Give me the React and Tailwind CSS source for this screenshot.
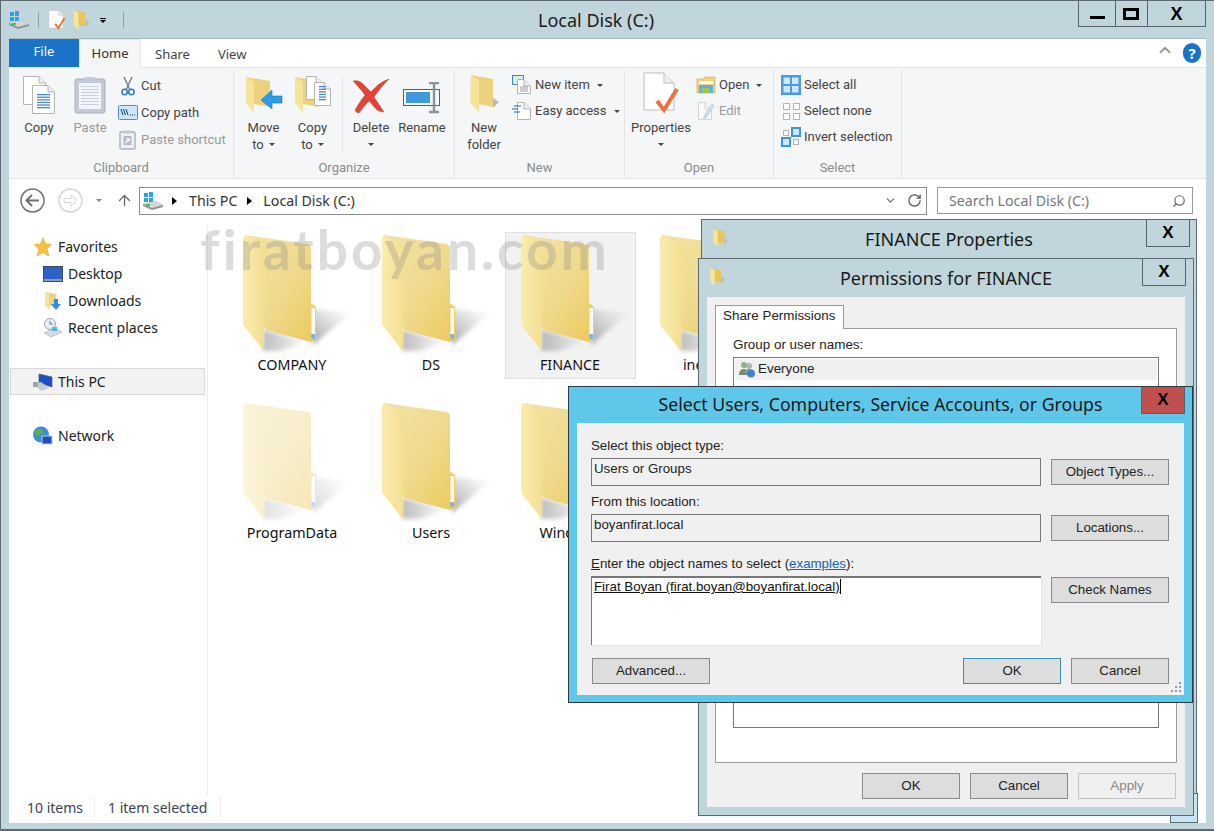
import { ArrowUp, ChevronDown, ChevronUp, RotateCw, Search } from "lucide-react";

function Caret({ className = "" }) {
  return <span className={`inline-block w-0 h-0 border-x-[3px] border-x-transparent border-t-[3px] border-t-[#444] ${className}`} />;
}

function FolderIcon({ faded }) {
  return (
    <svg width="108" height="122" viewBox="0 0 108 122" className={faded ? "opacity-45" : ""}>
      <defs>
        <linearGradient id="fback" x1="0" y1="0" x2="1" y2="1">
          <stop offset="0" stopColor="#f2e3a6" />
          <stop offset="0.55" stopColor="#efd98c" />
          <stop offset="1" stopColor="#ecc95c" />
        </linearGradient>
        <linearGradient id="fflap" x1="0" y1="0" x2="1" y2="0">
          <stop offset="0" stopColor="#faecb0" />
          <stop offset="1" stopColor="#f3dd8e" />
        </linearGradient>
        <linearGradient id="fshadow" x1="0" y1="1" x2="1" y2="0">
          <stop offset="0" stopColor="#a0a0a0" />
          <stop offset="0.8" stopColor="#c8c8c8" stopOpacity="0.2" />
          <stop offset="1" stopColor="#c8c8c8" stopOpacity="0" />
        </linearGradient>
        <linearGradient id="fshadow2" x1="0" y1="0" x2="1" y2="0">
          <stop offset="0" stopColor="#a0a0a0" stopOpacity="0.7" />
          <stop offset="1" stopColor="#a0a0a0" stopOpacity="0" />
        </linearGradient>
        <filter id="fblur" x="-20%" y="-20%" width="140%" height="140%">
          <feGaussianBlur stdDeviation="2" />
        </filter>
      </defs>
      <path d="M70 76 L108 80 L70 112 Z" fill="url(#fshadow)" filter="url(#fblur)" />
      <path d="M20 97 L66 108 L38 118 L20 118 Z" fill="url(#fshadow2)" filter="url(#fblur)" />
      <path d="M2 2 L65 11 Q68 12 68 16 L68 70 L73 74 L73 107 L68 109 L22 97 Z" fill="url(#fback)" />
      <rect x="68.5" y="75" width="3.5" height="26" fill="#fdfdf5" />
      <rect x="68.5" y="101" width="3.5" height="5" fill="#7fb0e0" />
      <path d="M2 2 L21 12 Q24 14 24 18 L24 75 L21 78 L21 118 L0 92 L0 5 Z" fill="url(#fflap)" />
    </svg>
  );
}

function SmallFolder({ w = 14, h = 18 }) {
  return (
    <svg width={w} height={h} viewBox="0 0 14 18">
      <path d="M1 1 L11 3 L11 14 L4 13 Z" fill="#e6c65e" />
      <path d="M11 9 L14 11 L11 15 Z" fill="#bbb" />
      <path d="M1 1 L5 3 L5 17 L1 13 Z" fill="#f6e59a" />
    </svg>
  );
}

function PageIcon({ x = 0, y = 0, w = 24, h = 30, lines }) {
  return (
    <g transform={`translate(${x} ${y})`}>
      <path d={`M0.5 0.5 H${w - 7} L${w - 0.5} 7 V${h - 0.5} H0.5 Z`} fill="#fff" stroke="#b4b4b4" />
      <path d={`M${w - 7} 0.5 V7 H${w - 0.5}`} fill="#eee" stroke="#b4b4b4" />
      {lines && [0, 1, 2, 3, 4, 5].map((i) => <rect key={i} x="5" y={h - 20 + i * 2.6} width={w - 10} height="1.3" fill="#4d86c0" />)}
    </g>
  );
}

function CopyIcon() {
  return (
    <svg width="34" height="38" viewBox="0 0 34 38">
      <PageIcon x={1} y={0} w={23} h={29} />
      <PageIcon x={10} y={9} w={23} h={29} lines />
    </svg>
  );
}

function PasteIcon() {
  return (
    <svg width="32" height="38" viewBox="0 0 32 38">
      <rect x="1" y="3" width="30" height="34" rx="2" fill="#c2cad8" stroke="#a5aebf" />
      <rect x="5" y="7" width="22" height="26" fill="#f4f5f8" />
      {[0, 1, 2, 3, 4, 5, 6].map((i) => <rect key={i} x="7" y={10 + i * 3} width="18" height="1" fill="#c8d0dc" />)}
      <rect x="11" y="1" width="10" height="5" rx="1" fill="#c2cad8" />
    </svg>
  );
}

function ScissorsIcon() {
  return (
    <svg width="14" height="20" viewBox="0 0 14 20" fill="none">
      <path d="M3 1 L9 14 M11 1 L5 14" stroke="#7e8894" strokeWidth="1.6" />
      <circle cx="3.6" cy="16" r="2.7" stroke="#2b7cd3" strokeWidth="1.5" />
      <circle cx="10.4" cy="16" r="2.7" stroke="#2b7cd3" strokeWidth="1.5" />
    </svg>
  );
}

function CopyPathIcon() {
  return (
    <svg width="20" height="16" viewBox="0 0 20 16">
      <rect x="0.5" y="0.5" width="19" height="14" rx="1" fill="#cfe6fa" stroke="#4a90d9" />
      <path d="M3 4 L5 10 M5.5 4 L7.5 10 M8 4 L10 10" stroke="#1a3a66" strokeWidth="1" />
      <path d="M12 10 H13 M14 10 H15 M16 10 H17" stroke="#1a3a66" strokeWidth="1" />
    </svg>
  );
}

function PasteShortcutIcon() {
  return (
    <svg width="18" height="20" viewBox="0 0 18 20">
      <rect x="1" y="2" width="15" height="17" rx="1" fill="#eef0f4" stroke="#a9b2c0" strokeWidth="1.4" />
      <rect x="5" y="0.5" width="7" height="3" fill="#c2cad8" />
      <rect x="4.5" y="6" width="8" height="9" fill="#b4bac4" />
      <path d="M6.5 13 L10 9 M7.5 8.8 H10.2 V11.5" stroke="#fff" strokeWidth="1.2" fill="none" />
    </svg>
  );
}

function MoveToIcon() {
  return (
    <svg width="38" height="38" viewBox="0 0 38 38">
      <path d="M1 1 L25 5 L25 31 L9 28 Z" fill="#ecd27c" />
      <path d="M1 1 L9 6 L9 37 L1 27 Z" fill="#f6e49a" />
      <path d="M37 20 H27 V14 L16 24 L27 33 V27 H37 Z" fill="#2f9be8" stroke="#1778c4" strokeWidth="0.6" />
    </svg>
  );
}

function CopyToIcon() {
  return (
    <svg width="38" height="38" viewBox="0 0 38 38">
      <path d="M1 1 L25 5 L25 31 L9 28 Z" fill="#ecd27c" />
      <path d="M1 1 L9 6 L9 37 L1 27 Z" fill="#f6e49a" />
      <PageIcon x={12} y={0} w={17} h={24} />
      <PageIcon x={20} y={6} w={17} h={24} lines />
    </svg>
  );
}

function DeleteIcon() {
  return (
    <svg width="38" height="36" viewBox="0 0 38 36">
      <path d="M1 3 C5 2 8 3 11 6 L19 14 C24 8 30 3 37 1 C31 7 26 13 22 19 L32 34 C29 34 26 33 24 31 L17 23 C13 27 10 31 7 35 C5 35 4 34 3 32 C6 27 9 22 13 17 C9 12 5 7 1 3 Z" fill="#e04436" stroke="#c04a3e" strokeWidth="0.5" />
    </svg>
  );
}

function RenameIcon() {
  return (
    <svg width="38" height="32" viewBox="0 0 38 32">
      <rect x="0.5" y="7.5" width="36" height="16" fill="#f4fbff" stroke="#1c6fb5" />
      <rect x="3" y="10" width="24" height="11" fill="#3f9ad9" />
      <path d="M26 1 H36 M31 1 V30 M26 30 H36" stroke="#8a929c" strokeWidth="2.4" fill="none" />
    </svg>
  );
}

function NewFolderIcon() {
  return (
    <svg width="30" height="40" viewBox="0 0 30 40">
      <path d="M2 1 L24 5 L24 33 L9 30 Z" fill="#ecd27c" />
      <path d="M24 24 L30 28 L24 34 Z" fill="#bbb" />
      <path d="M2 1 L10 6 L10 39 L1 28 Z" fill="#f6e49a" />
    </svg>
  );
}

function NewItemIcon() {
  return (
    <svg width="20" height="20" viewBox="0 0 20 20">
      <rect x="0.5" y="0.5" width="11" height="9" fill="#d8ecfb" stroke="#3f86c8" />
      <PageIcon x={5} y={4} w={14} h={15} />
      <path d="M8 12 H16 M8 14 H16 M8 16 H16" stroke="#999" />
    </svg>
  );
}

function EasyAccessIcon() {
  return (
    <svg width="20" height="20" viewBox="0 0 20 20">
      <PageIcon x={5} y={1} w={14} h={18} />
      <path d="M2 5 H9 M0 8 H6 M2 11 H8" stroke="#2469b8" strokeWidth="1.2" />
    </svg>
  );
}

function PropertiesIcon({ w = 36, h = 42 }) {
  return (
    <svg width={w} height={h} viewBox="0 0 36 42">
      <path d="M1 1 H21 L31 11 V38 H1 Z" fill="#fff" stroke="#bdbdbd" />
      <path d="M21 1 V11 H31" fill="#eee" stroke="#bdbdbd" />
      <path d="M14 29 L21 38 L34 17" fill="none" stroke="#e8743c" strokeWidth="4" />
    </svg>
  );
}

function OpenIcon() {
  return (
    <svg width="20" height="18" viewBox="0 0 20 18">
      <path d="M1 3 H7 L9 1 H19 V17 H1 Z" fill="#f1d27a" stroke="#c9a94c" strokeWidth="0.6" />
      <rect x="3" y="5" width="14" height="3" fill="#fff" />
      <rect x="3" y="9" width="14" height="8" fill="#5cb0e8" />
      <rect x="6" y="12" width="8" height="5" fill="#9ec653" />
    </svg>
  );
}

function EditIcon() {
  return (
    <svg width="18" height="20" viewBox="0 0 18 20" className="opacity-50">
      <PageIcon x={1} y={1} w={14} h={18} />
      <path d="M7 15 L15 3 L17 5 L9 17 L6.5 17.5 Z" fill="#a8c8e8" stroke="#5b8fc2" strokeWidth="0.6" />
    </svg>
  );
}

function SelectNoneIcon() {
  return (
    <svg width="17" height="17" viewBox="0 0 17 17">
      {[[0, 0], [10, 0], [0, 10], [10, 10]].map(([x, y]) => (
        <rect key={`${x}-${y}`} x={x + 0.5} y={y + 0.5} width="6" height="6" fill="#fff" stroke="#b4b4b4" />
      ))}
    </svg>
  );
}

function InvertIcon() {
  return (
    <svg width="20" height="20" viewBox="0 0 20 20">
      <rect x="2.5" y="3.5" width="5" height="5" fill="#fff" stroke="#b4b4b4" />
      <rect x="12.5" y="12.5" width="5" height="5" fill="#fff" stroke="#b4b4b4" />
      <rect x="11" y="1" width="8" height="8" fill="#cfe6fb" stroke="#3d94e6" strokeWidth="2" />
      <rect x="1" y="11" width="8" height="8" fill="#cfe6fb" stroke="#3d94e6" strokeWidth="2" />
    </svg>
  );
}

function SelectAllIcon() {
  return (
    <svg width="20" height="20" viewBox="0 0 20 20">
      <rect width="20" height="20" fill="#4a9ae8" />
      <rect x="2.5" y="2.5" width="6.5" height="6.5" fill="#cfe6fb" />
      <rect x="11" y="2.5" width="6.5" height="6.5" fill="#cfe6fb" />
      <rect x="2.5" y="11" width="6.5" height="6.5" fill="#cfe6fb" />
      <rect x="11" y="11" width="6.5" height="6.5" fill="#cfe6fb" />
    </svg>
  );
}

function DriveIcon() {
  return (
    <svg width="20" height="18" viewBox="0 0 20 18">
      <rect x="1" y="1" width="4" height="4" fill="#2aa3e0" />
      <rect x="6" y="0" width="4" height="5" fill="#2aa3e0" />
      <rect x="1" y="6" width="4" height="4" fill="#2aa3e0" />
      <rect x="6" y="6" width="4" height="4" fill="#2aa3e0" />
      <path d="M0 12 L12 9 L20 13 L20 15 L9 18 L0 14 Z" fill="#8d9491" />
      <path d="M0 12 L12 9 L20 13 L9 16 Z" fill="#d2d8d4" />
      <rect x="3" y="12" width="4" height="2" fill="#3fbf6a" />
    </svg>
  );
}

function CircleNav({ light, flip }) {
  const c = light ? "#d6d6d6" : "#6f6f6f";
  return (
    <svg width="25" height="25" viewBox="0 0 25 25" fill="none">
      <circle cx="12.5" cy="12.5" r="11.5" stroke={c} strokeWidth="1.5" />
      {flip ? (
        <path d="M6 10.5 H13 V7 L19 12.5 L13 18 V14.5 H6 Z" stroke={c} />
      ) : (
        <path d="M19 12.5 H7 M12 7 L6.5 12.5 L12 18" stroke={c} strokeWidth="2" />
      )}
    </svg>
  );
}

function Triangle({ className = "" }) {
  return <span className={`block w-0 h-0 shrink-0 border-y-[4px] border-y-transparent border-l-[5px] border-l-black ${className}`} />;
}

function StarIcon() {
  return (
    <svg width="18" height="20" viewBox="0 0 18 20">
      <path d="M9 1 L11.5 7 L17.5 7.5 L13 12 L15 19 L9 15.5 L3 19 L5 12 L0.5 7.5 L6.5 7 Z" fill="#f7c23e" stroke="#f09a2e" strokeWidth="0.6" />
    </svg>
  );
}

function DesktopIcon() {
  return (
    <svg width="20" height="16" viewBox="0 0 20 16">
      <rect x="0.5" y="0.5" width="19" height="15" fill="#2a62c8" stroke="#3a4a5e" />
      <rect x="1" y="13" width="18" height="2" fill="#8aa0b8" />
    </svg>
  );
}

function DownloadsIcon() {
  return (
    <svg width="18" height="20" viewBox="0 0 18 20">
      <path d="M1 1 L12 3 L12 16 L5 15 Z" fill="#ecd27c" />
      <path d="M1 1 L5 3 L5 19 L1 14 Z" fill="#f6e49a" />
      <path d="M10 8 H14 V13 H17 L12 19 L7 13 H10 Z" fill="#2f8fdf" />
    </svg>
  );
}

function RecentIcon() {
  return (
    <svg width="20" height="20" viewBox="0 0 20 20">
      <circle cx="7" cy="6" r="5.5" fill="#e8eef4" stroke="#9aa5b0" />
      <path d="M7 3 V6 H10" stroke="#6a7680" fill="none" />
      <path d="M1 15 L12 10 L19 14 L8 19 Z" fill="#d4dce2" stroke="#a0a8b0" strokeWidth="0.6" />
      <rect x="9" y="9" width="5" height="4" fill="#5bb0e8" />
    </svg>
  );
}

function PcIcon() {
  return (
    <svg width="20" height="18" viewBox="0 0 20 18">
      <path d="M6 1 L19 4 L19 14 L6 10 Z" fill="#1f4fc8" stroke="#4a5a6e" strokeWidth="0.7" />
      <path d="M1 11 L8 9 L16 15 L8 18 Z" fill="#c4ccd2" />
      <rect x="0" y="9" width="5" height="5" fill="#9aa6ae" />
    </svg>
  );
}

function NetworkIcon() {
  return (
    <svg width="20" height="20" viewBox="0 0 20 20">
      <circle cx="8" cy="8.5" r="8" fill="#3a8fd0" />
      <path d="M3 4 C6 2 9 3 10 6 C8 9 5 8 4 12 C2 10 2 6 3 4 Z M11 11 C13 10 15 11 15 13 L12 15 Z" fill="#5db04a" />
      <rect x="9" y="10" width="10" height="8" fill="#1f4fc8" stroke="#c4ccd2" />
    </svg>
  );
}

function UsersIcon() {
  return (
    <svg width="17" height="17" viewBox="0 0 17 17">
      <circle cx="5" cy="4" r="3" fill="#8fae8a" />
      <path d="M0 14 C0 9 3 8 5 8 C8 8 9 10 9 14 Z" fill="#6f8f76" />
      <circle cx="10" cy="5" r="3" fill="#a9b9ad" />
      <path d="M6 12 C6 9 8 8 11 8 C13 8 15 9 15 12 Z" fill="#8f9f98" />
      <circle cx="12" cy="12.5" r="4" fill="#3f83cf" />
    </svg>
  );
}

function LargeBtn({ icon, lines, caret, disabled, w }) {
  return (
    <div className={`flex flex-col items-center shrink-0 ${w}`}>
      <div className="flex items-end justify-center h-[44px]">{icon}</div>
      <div className={`mt-[5px] flex flex-col items-center leading-[17px] ${disabled ? "text-[#9a9a9a]" : "text-[#444]"}`}>
        {lines.map((l, i) => (
          <span key={l} className="flex items-center gap-[5px]">
            {l}
            {caret && i === lines.length - 1 && lines.length > 1 && <Caret />}
          </span>
        ))}
        {caret && lines.length === 1 && <span className="h-[17px] flex items-center"><Caret /></span>}
      </div>
    </div>
  );
}

function SmallBtn({ icon, label, caret, disabled }) {
  return (
    <div className={`flex items-center gap-[3px] h-[20px] whitespace-nowrap ${disabled ? "text-[#9a9a9a]" : "text-[#444]"}`}>
      <span className="flex justify-center w-[20px]">{icon}</span>
      <span>{label}</span>
      {caret && <Caret className="ml-[4px]" />}
    </div>
  );
}

function Group({ label, className, children }) {
  return (
    <div className={`relative flex shrink-0 h-[107px] mt-[2px] border-r border-[#e2e3e4] ${className}`}>
      {children}
      <span className="absolute bottom-[1px] inset-x-0 text-center text-[#8c8c8c] leading-[17px]">{label}</span>
    </div>
  );
}

function Ribbon() {
  return (
    <div className="h-[112px] bg-[#f5f6f7] border-y border-[#e3e4e5] flex font-['Roboto',sans-serif] text-[13px]">
      <Group label="Clipboard" className="w-[225px] pl-[1px]">
        <LargeBtn w="w-[58px]" icon={<CopyIcon />} lines={["Copy"]} />
        <LargeBtn w="w-[44px]" icon={<PasteIcon />} lines={["Paste"]} disabled />
        <div className="flex flex-col gap-[7px] pt-[6px] pl-[6px]">
          <SmallBtn icon={<ScissorsIcon />} label="Cut" />
          <SmallBtn icon={<CopyPathIcon />} label="Copy path" />
          <SmallBtn icon={<PasteShortcutIcon />} label="Paste shortcut" disabled />
        </div>
      </Group>
      <Group label="Organize" className="w-[221px] pl-[5px]">
        <LargeBtn w="w-[49px]" icon={<MoveToIcon />} lines={["Move", "to"]} caret />
        <LargeBtn w="w-[49px]" icon={<CopyToIcon />} lines={["Copy", "to"]} caret />
        <div className="w-px h-[76px] mt-[6px] mx-[5px] bg-[#e4e5e6]" />
        <LargeBtn w="w-[46px]" icon={<DeleteIcon />} lines={["Delete"]} caret />
        <LargeBtn w="w-[56px]" icon={<RenameIcon />} lines={["Rename"]} />
      </Group>
      <Group label="New" className="w-[170px] pl-[6px]">
        <LargeBtn w="w-[46px]" icon={<NewFolderIcon />} lines={["New", "folder"]} />
        <div className="flex flex-col gap-[6px] pt-[5px] pl-[5px]">
          <SmallBtn icon={<NewItemIcon />} label="New item" caret />
          <SmallBtn icon={<EasyAccessIcon />} label="Easy access" caret />
        </div>
      </Group>
      <Group label="Open" className="w-[149px] pl-[4px]">
        <LargeBtn w="w-[64px]" icon={<PropertiesIcon />} lines={["Properties"]} caret />
        <div className="flex flex-col gap-[6px] pt-[5px] pl-[3px]">
          <SmallBtn icon={<OpenIcon />} label="Open" caret />
          <SmallBtn icon={<EditIcon />} label="Edit" disabled />
        </div>
      </Group>
      <Group label="Select" className="w-[128px] pl-[7px]">
        <div className="flex flex-col gap-[6px] pt-[5px]">
          <SmallBtn icon={<SelectAllIcon />} label="Select all" />
          <SmallBtn icon={<SelectNoneIcon />} label="Select none" />
          <SmallBtn icon={<InvertIcon />} label="Invert selection" />
        </div>
      </Group>
    </div>
  );
}

function NavRow({ icon, label, indent, selected, className = "" }) {
  return (
    <div className={`flex items-center h-[27px] gap-[5px] text-[#222] ${indent ? "pl-[33px]" : "pl-[23px]"} ${selected ? "bg-[#f2f2f2] border border-[#d9d9d9]" : ""} ${className}`}>
      <span className="w-[21px] flex justify-center shrink-0">{icon}</span>
      {label}
    </div>
  );
}

function Tile({ name, faded, selected }) {
  return (
    <div className={`w-[131px] h-[147px] flex flex-col items-start pl-[15px] ${selected ? "bg-[#f2f2f2] border border-[#dedede]" : "border border-transparent"}`}>
      <FolderIcon faded={faded} />
      <span className="w-[98px] text-center text-[#111] text-[14.3px] leading-[20px]">{name}</span>
    </div>
  );
}

function DlgBtn({ children, className = "", disabled, w = "w-[98px]", blue }) {
  return (
    <div className={`h-[26px] flex items-center justify-center border ${w} ${disabled ? "bg-[#f0f0f0] border-[#c4c4c4] text-[#8a8a8a]" : blue ? "bg-[#dddddd] border-[#3a8fb8]" : "bg-[#dddddd] border-[#8a8a8a]"} ${className}`}>
      {children}
    </div>
  );
}

function CloseBox({ red, className = "" }) {
  return (
    <div className={`h-[27px] w-[44px] flex items-center justify-center border border-[#56636c] font-['Liberation_Sans',sans-serif] font-bold text-[17px] text-black ${red ? "bg-[#c0504d]" : ""} ${className}`}>
      X
    </div>
  );
}

function ReadOnlyField({ children }) {
  return (
    <div className="h-[28px] flex-1 bg-[#f0f0f0] border border-[#777] pl-[2px] pt-[1px] leading-[18px] text-[#222]">{children}</div>
  );
}

export default function App() {
  return (
    <div className="relative w-[1214px] h-[831px] overflow-hidden flex flex-col bg-[#c1d5dc] border-t border-l border-b-2 border-[#5d6a74] font-['Noto_Sans','Open_Sans',sans-serif] text-[14px]">
      {/* title bar */}
      <div className="h-[37px] flex items-start shrink-0 relative pl-[8px]">
        <div className="flex items-center h-[38px] gap-[6px]">
          <DriveIcon />
          <div className="w-px h-[16px] bg-[#8fa0a8] mx-[3px]" />
          <PropertiesIcon w={18} h={20} />
          <SmallFolder w={18} h={22} />
          <span className="ml-[4px] flex flex-col items-center gap-[1px]">
            <span className="w-[6px] h-px bg-black" />
            <Caret className="border-t-black" />
          </span>
          <div className="w-px h-[16px] bg-[#8fa0a8] ml-[11px]" />
        </div>
        <span className="absolute left-[537px] top-[7px] text-[18px] leading-[24px] text-[#1a1a1a]">Local Disk (C:)</span>
        <div className="ml-auto mr-[8px] flex h-[27px] border-x border-b border-[#56636c] -mt-px font-['Liberation_Sans',sans-serif] text-black">
          <div className="w-[36px] flex items-end justify-center pb-[7px]"><span className="w-[15px] h-[3px] bg-black" /></div>
          <div className="w-[33px] border-x border-[#56636c] flex items-center justify-center pt-[2px] pr-[2px]"><span className="w-[16px] h-[12px] border-[3px] border-black" /></div>
          <div className="w-[57px] flex items-center justify-center font-bold text-[18px] pt-[2px]">X</div>
        </div>
      </div>

      {/* window body */}
      <div className="ml-[8px] mr-[8px] mb-[6px] flex-1 flex flex-col bg-white min-h-0 border-t border-[#a9b9c0]">
        <div className="h-[28px] flex shrink-0 relative text-[13px] text-[#444]">
          <div className="w-[70px] bg-[#1a73c8] text-white flex items-center justify-center pb-[3px]">File</div>
          <div className="w-[62px] h-[29px] bg-[#f5f6f7] border-x border-t border-[#e3e4e5] z-10 flex items-center justify-center text-[#333]">Home</div>
          <span className="ml-[14px] self-center pt-[4px]">Share</span>
          <span className="ml-[28px] self-center pt-[4px]">View</span>
          <ChevronUp className="absolute right-[32px] top-[2px] text-[#9a9a9a]" size={18} strokeWidth={2.5} />
          <div className="absolute right-[5px] top-[4px] w-[18px] h-[20px] rounded-full bg-[#1a73c8] text-white font-bold text-[15px] leading-[20px] text-center">?</div>
        </div>
        <Ribbon />

        {/* address row */}
        <div className="h-[46px] flex items-center shrink-0 pl-[11px] pr-[11px] pb-[3px] text-[#333]">
          <CircleNav />
          <span className="ml-[13px]"><CircleNav light flip /></span>
          <Caret className="ml-[13px] border-t-[#888]" />
          <ArrowUp className="ml-[14px] text-[#666]" size={17} strokeWidth={1.8} />
          <div className="ml-[6px] w-[788px] h-[28px] border border-[#8c8c8c] flex items-center pl-[3px] text-[14.2px]">
            <DriveIcon />
            <Triangle className="ml-[9px]" />
            <span className="ml-[12px]">This PC</span>
            <Triangle className="ml-[10px]" />
            <span className="ml-[11px]">Local Disk (C:)</span>
            <ChevronDown className="ml-auto text-[#666]" size={13} strokeWidth={2} />
            <RotateCw className="mr-[4px] ml-[10px] text-[#555]" size={15} strokeWidth={2} />
          </div>
          <div className="ml-[10px] w-[256px] h-[27px] border border-[#9a9a9a] flex items-center pl-[11px] pr-[6px] text-[#777] text-[14.2px]">
            Search Local Disk (C:)
            <Search className="ml-auto -scale-x-100 text-[#666]" size={14} />
          </div>
        </div>

        {/* main */}
        <div className="flex-1 flex min-h-0 relative">
          <div className="w-[199px] shrink-0 border-r border-[#eeeeee] pt-[8px] flex flex-col">
            <NavRow icon={<StarIcon />} label="Favorites" />
            <NavRow icon={<DesktopIcon />} label="Desktop" indent />
            <NavRow icon={<DownloadsIcon />} label="Downloads" indent />
            <NavRow icon={<RecentIcon />} label="Recent places" indent />
            <NavRow icon={<PcIcon />} label="This PC" selected className="mt-[27px] mr-[2px] ml-[1px] !pl-[21px]" />
            <NavRow icon={<NetworkIcon />} label="Network" className="mt-[27px]" />
          </div>
          <div className="flex-1 pl-[19px] pt-[7px]">
            <div className="grid grid-cols-[repeat(4,131px)] gap-x-[8px] gap-y-[21px]">
              <Tile name="COMPANY" />
              <Tile name="DS" />
              <Tile name="FINANCE" selected />
              <Tile name="inetpub" />
              <Tile name="ProgramData" faded />
              <Tile name="Users" />
              <Tile name="Windows" />
            </div>
          </div>
          <div className="absolute left-[191px] top-[-6px] font-['Lato',sans-serif] font-bold text-[55px] leading-[60px] tracking-[3px] text-[#8a8a8a]/30 pointer-events-none">firatboyan.com</div>
        </div>

        {/* status bar */}
        <div className="h-[28px] shrink-0 flex items-center pl-[18px] pb-[4px] text-[#3a4156]">
          <span className="w-[68px] border-r border-[#eee]">10 items</span>
          <span className="w-[126px] pl-[13px] border-r border-[#eee] whitespace-nowrap">1 item selected</span>
        </div>
      </div>

      {/* FINANCE Properties window */}
      <div className="absolute left-[700px] top-[218px] w-[496px] h-[590px] bg-[#c1d5dc] border border-[#5d6a74] flex flex-col">
        <div className="h-[38px] flex items-start pl-[10px] shrink-0 relative">
          <span className="mt-[8px]"><SmallFolder w={16} h={20} /></span>
          <span className="absolute inset-x-0 top-[6px] text-center text-[18px] leading-[26px] text-[#1a1a1a]">FINANCE Properties</span>
          <CloseBox className="ml-auto mr-[6px] border-t-0 relative" />
        </div>
      </div>
      <div className="absolute left-[1169px] top-[792px] w-[28px] h-[30px] bg-[#c7e4f4] border border-[#5d6a74]" />

      {/* Permissions window */}
      <div className="absolute left-[697px] top-[257px] w-[496px] h-[558px] bg-[#c1d5dc] border border-[#5d6a74] flex flex-col px-[8px] pb-[8px] font-['Liberation_Sans',sans-serif] text-[13.4px] text-[#222]">
        <div className="h-[38px] flex items-start shrink-0 relative font-['Noto_Sans',sans-serif]">
          <span className="mt-[8px] ml-[2px]"><SmallFolder w={16} h={20} /></span>
          <span className="absolute inset-x-0 top-[6px] text-center text-[18px] leading-[26px] text-[#1a1a1a]">Permissions for FINANCE</span>
          <CloseBox className="ml-auto -mr-[1px] border-t-0 relative" />
        </div>
        <div className="flex-1 bg-[#f0f0f0] pt-[8px] px-[8px] flex flex-col min-h-0">
          <div className="w-[129px] h-[24px] bg-white border border-b-0 border-[#9a9a9a] z-10 flex items-center pl-[7px] pb-[2px] shrink-0">Share Permissions</div>
          <div className="h-[435px] -mt-px bg-white border border-[#9a9a9a] pt-[7px] px-[17px] shrink-0">
            <div className="leading-[18px]">Group or user names:</div>
            <div className="h-[371px] mt-[3px] border border-[#777] p-px">
              <div className="h-[21px] bg-[#f0f0f0] flex items-center gap-[2px] pl-[4px]">
                <UsersIcon />
                Everyone
              </div>
            </div>
          </div>
          <div className="flex justify-end gap-[10px] mt-[10px] mr-px">
            <DlgBtn>OK</DlgBtn>
            <DlgBtn>Cancel</DlgBtn>
            <DlgBtn disabled>Apply</DlgBtn>
          </div>
        </div>
      </div>

      {/* Select Users dialog */}
      <div className="absolute left-[567px] top-[385px] w-[625px] h-[317px] bg-[#5fc8ea] border border-[#2c3a44] flex flex-col px-[8px] pb-[7px] font-['Liberation_Sans',sans-serif] text-[13.3px] text-[#222]">
        <div className="h-[36px] shrink-0 relative flex items-start font-['Noto_Sans',sans-serif]">
          <span className="absolute inset-x-0 top-[4px] text-center text-[17.7px] leading-[26px] text-[#1a1a1a]">Select Users, Computers, Service Accounts, or Groups</span>
          <CloseBox red className="ml-auto -mr-px border-t-0 relative" />
        </div>
        <div className="flex-1 bg-[#f0f0f0] relative pt-[15px] pl-[14px] pr-[15px] flex flex-col">
          <div className="leading-[16px]">Select this object type:</div>
          <div className="flex gap-[10px] mt-[4px]">
            <ReadOnlyField>Users or Groups</ReadOnlyField>
            <DlgBtn w="w-[118px]" className="mt-px">Object Types...</DlgBtn>
          </div>
          <div className="leading-[16px] mt-[8px]">From this location:</div>
          <div className="flex gap-[10px] mt-[4px]">
            <ReadOnlyField>boyanfirat.local</ReadOnlyField>
            <DlgBtn w="w-[118px]" className="mt-px">Locations...</DlgBtn>
          </div>
          <div className="leading-[16px] mt-[14px]">
            <u>E</u>nter the object names to select (<a className="text-[#1a5fb4] underline">examples</a>):
          </div>
          <div className="flex gap-[10px] mt-[4px]">
            <div className="h-[69px] flex-1 bg-white border-t-2 border-l border-[#777] pl-[2px] leading-[18px] shadow-[1px_1px_0_#e4e4e4]">
              <span className="underline text-[#111] border-r border-black">Firat Boyan (firat.boyan@boyanfirat.local)</span>
            </div>
            <DlgBtn w="w-[118px]" className="mt-px">Check Names</DlgBtn>
          </div>
          <div className="flex gap-[10px] mt-[13px] pl-px">
            <DlgBtn w="w-[118px]">Advanced...</DlgBtn>
            <DlgBtn blue className="ml-auto">OK</DlgBtn>
            <DlgBtn>Cancel</DlgBtn>
          </div>
          <svg width="12" height="12" viewBox="0 0 12 12" className="absolute right-[2px] bottom-[2px]" fill="#9a9a9a">
            <rect x="9" y="1" width="2" height="2" /><rect x="5" y="5" width="2" height="2" /><rect x="9" y="5" width="2" height="2" />
            <rect x="1" y="9" width="2" height="2" /><rect x="5" y="9" width="2" height="2" /><rect x="9" y="9" width="2" height="2" />
          </svg>
        </div>
      </div>
    </div>
  );
}
